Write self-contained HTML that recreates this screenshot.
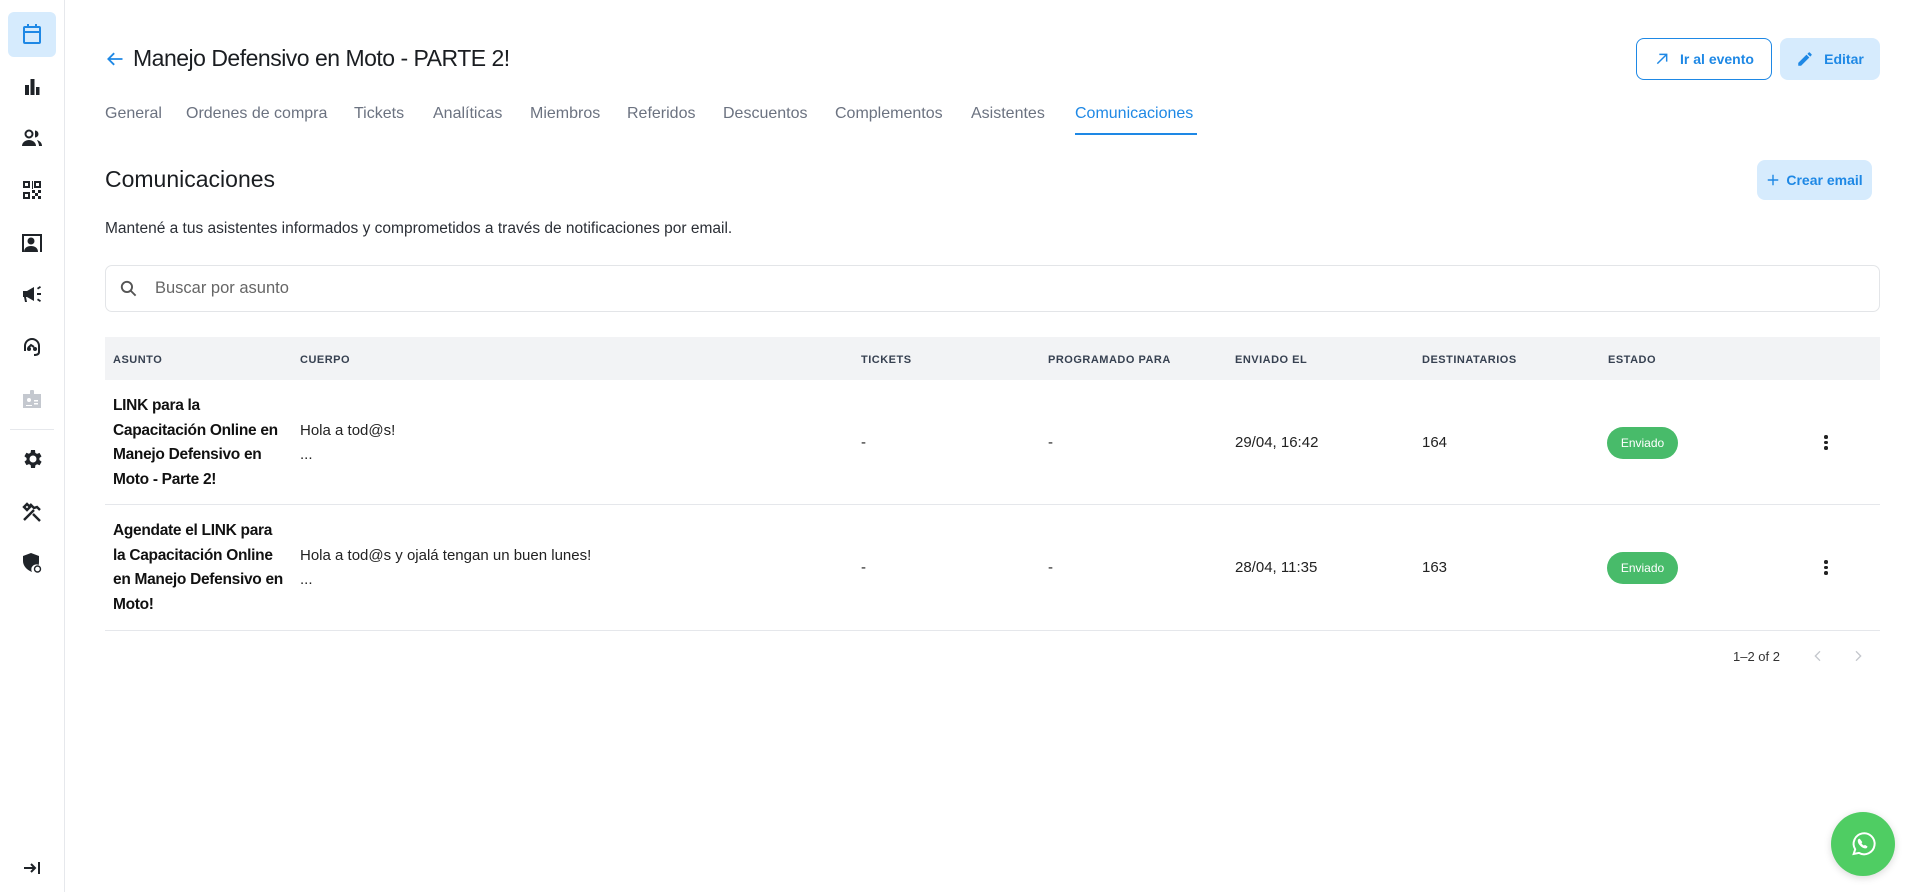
<!DOCTYPE html>
<html><head><meta charset="utf-8">
<style>
*{box-sizing:border-box;margin:0;padding:0}
body{width:1915px;height:892px;overflow:hidden;background:#fff;font-family:"Liberation Sans",sans-serif;color:#1f2328;position:relative}
.side{position:absolute;left:0;top:0;width:65px;height:892px;border-right:1px solid #e6e8ec}
.ic{position:absolute;left:20px;width:24px;height:24px}
.act{position:absolute;left:8px;top:12px;width:48px;height:45px;background:#d6ebfd;border-radius:6px}
.abs{position:absolute;white-space:nowrap}
.tabs span{position:absolute;top:105px;font-size:16px;color:#6b7280}
.btn{position:absolute;border-radius:8px;font-size:14px;font-weight:bold;color:#1e88e5;display:flex;align-items:center;justify-content:center;gap:10px}
.hdr{position:absolute;left:105px;top:337px;width:1775px;height:43px;background:#f2f3f5}
.h{position:absolute;top:354px;font-size:11px;font-weight:bold;color:#374151;letter-spacing:.5px}
.sub{position:absolute;left:113px;font-size:15.5px;font-weight:bold;line-height:24.5px;color:#111;letter-spacing:-.3px}
.body{position:absolute;left:300px;font-size:15px;line-height:24px;color:#222}
.c{position:absolute;font-size:15px;color:#222}
.chip{position:absolute;left:1607px;width:71px;height:32px;border-radius:16px;background:#48bb6a;color:#fff;font-size:12px;display:flex;align-items:center;justify-content:center}
.line{position:absolute;left:105px;width:1775px;height:1px;background:#e5e7eb}
.kb{position:absolute;left:1824px;width:4px}
.kb i{display:block;width:3.5px;height:3.5px;border-radius:50%;background:#222;margin-bottom:2px}
</style></head><body>
<div class="side">
<div class="act"></div>
<svg class="ic" style="top:22px" viewBox="0 0 24 24" fill="none" stroke="#1e88e5" stroke-width="2"><rect x="4" y="5" width="16" height="16" rx="1"/><path d="M4 10h16M8 2v4M16 2v4"/></svg>
<svg class="ic" style="top:75px" viewBox="0 0 24 24" fill="#1f2328"><rect x="5" y="10" width="4" height="10"/><rect x="10.5" y="4" width="4" height="16"/><rect x="16" y="12" width="3.5" height="8"/></svg>
<svg class="ic" style="top:126px" viewBox="0 0 24 24" fill="#1f2328"><circle cx="9" cy="8" r="3.5" fill="none" stroke="#1f2328" stroke-width="2"/><path d="M2 20c0-4 4-6 7-6s7 2 7 6z"/><path d="M15 4.5a3.5 3.5 0 0 1 0 7zM17 14c3 1 5 3 5 6h-3c0-2-1-4-2-6z"/></svg>
<svg class="ic" style="top:178px" viewBox="0 0 24 24" fill="#1f2328"><path d="M3 3h7v7H3zM5 5v3h3V5zM14 3h7v7h-7zM16 5v3h3V5zM3 14h7v7H3zM5 16v3h3v-3zM12 12h3v3h-3zM15 15h3v3h-3zM18 12h3v3h-3zM12 18h3v3h-3zM18 18h3v3h-3zM12 3h1v8h-1z"/></svg>
<svg class="ic" style="top:231px" viewBox="0 0 24 24" fill="#1f2328"><path d="M2 3h20v18h-2V5H4v16H2z"/><circle cx="11" cy="10" r="3.5"/><path d="M4 21c0-4 3-6 7-6s7 2 7 6z"/></svg>
<svg class="ic" style="top:282px" viewBox="0 0 24 24" fill="#1f2328"><path d="M3 9h4l7-4v14l-7-4H6l1 5H5l-1-5H3z"/><path d="M17 11h4v2h-4zM17 6l3-2 1 1.5-3 2zM17 18l3 2 1-1.5-3-2z"/></svg>
<svg class="ic" style="top:335px" viewBox="0 0 24 24" fill="none" stroke="#1f2328" stroke-width="2"><path d="M5 16v-5a7 7 0 0 1 14 0v6c0 2-2 3-5 3"/><path d="M8 13l3-3 3 2"/><circle cx="9" cy="14" r="1" fill="#1f2328"/><circle cx="15" cy="14" r="1" fill="#1f2328"/></svg>
<svg class="ic" style="top:387px" viewBox="0 0 24 24" fill="#c4c8cf"><path d="M3 7h18v14H3z"/><rect x="10" y="3" width="4" height="6" rx="1"/><circle cx="9" cy="13" r="2" fill="#fff"/><path d="M6 18h6v1H6zM14 13h4v1.5h-4zM14 16h4v1.5h-4z" fill="#fff"/></svg>
<div style="position:absolute;left:10px;top:429px;width:44px;height:1px;background:#e6e8ec"></div>
<svg class="ic" style="top:447px" viewBox="0 0 24 24" fill="#1f2328"><path d="M19.4 13a7.5 7.5 0 0 0 0-2l2.1-1.6-2-3.5-2.5 1a7.6 7.6 0 0 0-1.7-1L15 3h-4l-.4 2.7a7.6 7.6 0 0 0-1.7 1l-2.5-1-2 3.5L6.6 11a7.5 7.5 0 0 0 0 2l-2.1 1.6 2 3.5 2.5-1a7.6 7.6 0 0 0 1.7 1L11 21h4l.4-2.7a7.6 7.6 0 0 0 1.7-1l2.5 1 2-3.5zM13 15.5a3.5 3.5 0 1 1 0-7 3.5 3.5 0 0 1 0 7z"/></svg>
<svg class="ic" style="top:500px" viewBox="0 0 24 24" fill="none" stroke="#1f2328" stroke-width="2.4"><path d="M4 20L14 10M10 4l4 4 3-1 3 3M13 14l7 7M4 7l3-3 3 3-3 3z"/></svg>
<svg class="ic" style="top:551px" viewBox="0 0 24 24" fill="#1f2328"><path d="M11 2l8 3v6c0 1-.1 2-.4 3A5 5 0 0 0 12 21c-5-2-9-6-9-11V5z"/><circle cx="17.5" cy="18" r="4" fill="#fff"/><circle cx="17.5" cy="18" r="3" fill="none" stroke="#1f2328" stroke-width="1.4"/></svg>
<svg class="ic" style="top:856px" viewBox="0 0 24 24" fill="none" stroke="#1f2328" stroke-width="2"><path d="M4 12h11M11 8l4 4-4 4M19 6v12"/></svg>
</div>

<svg class="abs" style="left:105px;top:49px" width="20" height="20" viewBox="0 0 24 24" fill="none" stroke="#1e88e5" stroke-width="2.2"><path d="M21 12H4M11 5l-7 7 7 7"/></svg>
<div class="abs" style="left:133px;top:45px;font-size:23px;font-weight:500;color:#1a1d21;letter-spacing:-.5px">Manejo Defensivo en Moto - PARTE 2!</div>

<div class="btn" style="left:1636px;top:38px;width:136px;height:42px;border:1.5px solid #1e88e5"><svg width="16" height="16" viewBox="0 0 24 24" fill="none" stroke="#1e88e5" stroke-width="2.2"><path d="M5 19L19 5M8 5h11v11"/></svg>Ir al evento</div>
<div class="btn" style="left:1780px;top:38px;width:100px;height:42px;background:#d6ebfd"><svg width="18" height="18" viewBox="0 0 24 24" fill="#1e88e5"><path d="M3 17.2V21h3.8L17.8 10l-3.8-3.8zM20.7 7a1 1 0 0 0 0-1.4l-2.3-2.3a1 1 0 0 0-1.4 0l-1.8 1.8 3.8 3.8z"/></svg>Editar</div>

<div class="tabs">
<span style="left:105px">General</span>
<span style="left:186px">Ordenes de compra</span>
<span style="left:354px">Tickets</span>
<span style="left:433px">Analíticas</span>
<span style="left:530px">Miembros</span>
<span style="left:627px">Referidos</span>
<span style="left:723px">Descuentos</span>
<span style="left:835px">Complementos</span>
<span style="left:971px">Asistentes</span>
<span style="left:1075px;color:#1e88e5">Comunicaciones</span>
</div>
<div style="position:absolute;left:1075px;top:133px;width:122px;height:2px;background:#1e88e5"></div>

<div class="abs" style="left:105px;top:166px;font-size:23px;font-weight:500;color:#1a1d21">Comunicaciones</div>
<div class="btn" style="left:1757px;top:160px;width:115px;height:40px;background:#d6ebfd;gap:6px"><svg width="14" height="14" viewBox="0 0 24 24" fill="none" stroke="#1e88e5" stroke-width="2.4"><path d="M12 3v18M3 12h18"/></svg>Crear email</div>
<div class="abs" style="left:105px;top:220px;font-size:15.5px;color:#2b2f36">Mantené a tus asistentes informados y comprometidos a través de notificaciones por email.</div>

<div style="position:absolute;left:105px;top:265px;width:1775px;height:47px;border:1px solid #e3e5e8;border-radius:7px"></div>
<svg class="abs" style="left:119px;top:279px" width="19" height="19" viewBox="0 0 24 24" fill="none" stroke="#555" stroke-width="2.4"><circle cx="10" cy="10" r="6.5"/><path d="M15 15l6 6"/></svg>
<div class="abs" style="left:155px;top:279px;font-size:16.5px;color:#666">Buscar por asunto</div>

<div class="hdr"></div>
<div class="h" style="left:113px">ASUNTO</div>
<div class="h" style="left:300px">CUERPO</div>
<div class="h" style="left:861px">TICKETS</div>
<div class="h" style="left:1048px">PROGRAMADO PARA</div>
<div class="h" style="left:1235px">ENVIADO EL</div>
<div class="h" style="left:1422px">DESTINATARIOS</div>
<div class="h" style="left:1608px">ESTADO</div>

<div class="sub" style="top:394px">LINK para la<br>Capacitación Online en<br>Manejo Defensivo en<br>Moto - Parte 2!</div>
<div class="body" style="top:419px">Hola a tod@s!<br>...</div>
<div class="c" style="left:861px;top:434px">-</div>
<div class="c" style="left:1048px;top:434px">-</div>
<div class="c" style="left:1235px;top:434px">29/04, 16:42</div>
<div class="c" style="left:1422px;top:434px">164</div>
<div class="chip" style="top:427px">Enviado</div>
<div class="kb" style="top:435px"><i></i><i></i><i></i></div>
<div class="line" style="top:504px"></div>

<div class="sub" style="top:519px">Agendate el LINK para<br>la Capacitación Online<br>en Manejo Defensivo en<br>Moto!</div>
<div class="body" style="top:544px">Hola a tod@s y ojalá tengan un buen lunes!<br>...</div>
<div class="c" style="left:861px;top:559px">-</div>
<div class="c" style="left:1048px;top:559px">-</div>
<div class="c" style="left:1235px;top:559px">28/04, 11:35</div>
<div class="c" style="left:1422px;top:559px">163</div>
<div class="chip" style="top:552px">Enviado</div>
<div class="kb" style="top:560px"><i></i><i></i><i></i></div>
<div class="line" style="top:630px"></div>

<div class="abs" style="left:1733px;top:649px;font-size:13px;color:#333">1–2 of 2</div>
<svg class="abs" style="left:1810px;top:648px" width="16" height="16" viewBox="0 0 24 24" fill="none" stroke="#c4c7cc" stroke-width="2"><path d="M15 5l-7 7 7 7"/></svg>
<svg class="abs" style="left:1850px;top:648px" width="16" height="16" viewBox="0 0 24 24" fill="none" stroke="#c4c7cc" stroke-width="2"><path d="M9 5l7 7-7 7"/></svg>

<div style="position:absolute;left:1831px;top:812px;width:64px;height:64px;border-radius:50%;background:#4fcd63;box-shadow:0 2px 8px rgba(0,0,0,.15)"></div>
<svg class="abs" style="left:1849px;top:830px" width="28" height="28" viewBox="0 0 24 24" fill="none" stroke="#fff" stroke-width="1.7"><path d="M4 20.5l1.3-4A9 9 0 1 1 8.5 19.6z"/><path d="M9 8c-.5 0-1 .6-1 1.3 0 2.5 3.5 6 6 6 .7 0 1.3-.5 1.3-1l-1.6-1-1 .7c-1-.5-2-1.5-2.6-2.6l.7-1z" fill="#fff" stroke-width="1"/></svg>
</body></html>
